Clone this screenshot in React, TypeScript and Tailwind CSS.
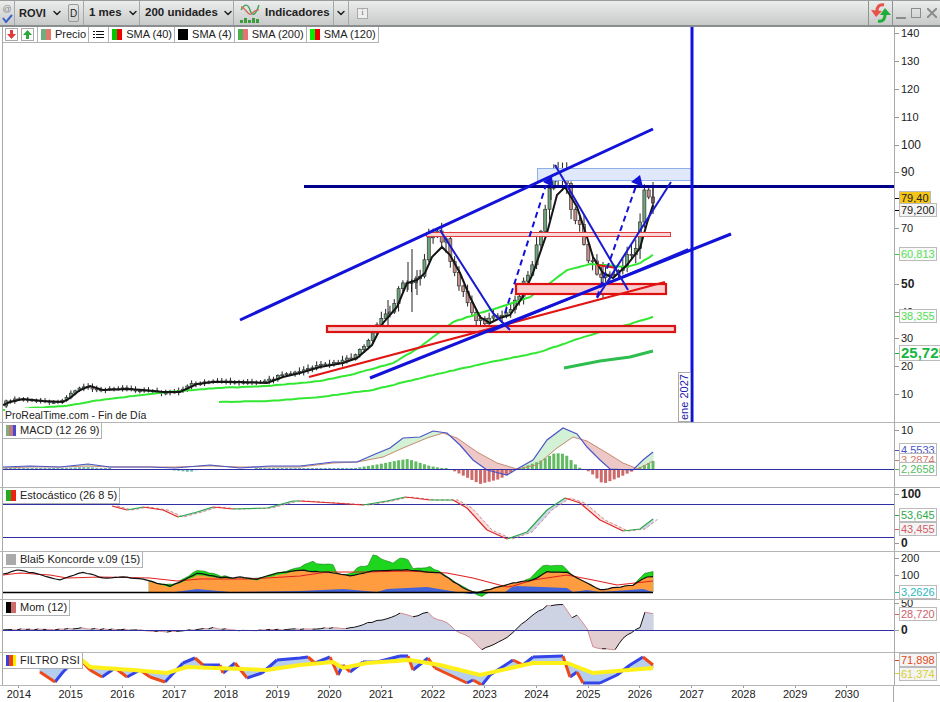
import { ChevronDown } from 'lucide-react';

type Pt = [number, number];

// all series are in page pixels, each pane's viewBox starts at its own top
const sma4: Pt[] = [[3,405],[10,402],[23,399],[43,401],[63,402],[70,398],[80,390],[90,386],[103,390],[127,389],[143,390],[163,392],[180,392],[197,384],[213,382],[240,382],[267,383],[283,377],[300,373],[320,367],[343,363],[357,358],[372,345],[383,323],[397,307],[407,283],[417,280],[425,273],[432,257],[442,247],[450,255],[460,273],[470,297],[480,317],[490,323],[500,318],[510,315],[522,298],[533,273],[547,233],[557,195],[565,187],[577,207],[587,237],[593,257],[603,273],[613,278],[627,265],[640,248],[647,223],[653,205]];
const sma40: Pt[] = [[3,410],[33,408],[67,406],[100,400],[167,392],[217,388],[267,386],[320,381],[350,375],[393,363],[420,347],[453,322],[480,313],[507,305],[530,297],[550,283],[567,270],[590,264],[627,267],[640,263],[653,255]];
const sma120: Pt[] = [[219,402],[270,401],[320,397],[373,390],[433,375],[487,363],[540,352],[575,340],[607,330],[630,324],[653,317]];

const macd: Pt[] = [[3,467],[30,466],[60,467],[88,464],[110,467],[150,467],[175,468],[210,465],[240,468],[270,466],[300,466],[333,462],[357,462],[373,455],[390,448],[403,438],[420,437],[433,431],[447,433],[460,445],[473,460],[487,470],[507,475],[517,469],[533,460],[547,440],[563,428],[577,434],[587,447],[600,460],[610,469],[633,470],[643,460],[653,452]];
const macdSig: Pt[] = [[3,468],[30,467],[60,467],[88,466],[110,467],[150,467],[175,467],[210,466],[240,467],[270,467],[300,467],[333,463],[357,462],[383,457],[403,448],[427,438],[443,433],[457,438],[477,452],[497,463],[517,469],[537,465],[557,448],[573,437],[587,441],[607,453],[623,463],[638,469],[653,461]];
const macdHist: Pt[] = [[3,1],[60,1],[88,2],[110,0],[140,-1],[170,-1],[190,-3],[200,0],[240,-1],[272,1],[300,1],[340,1],[355,1],[380,5],[400,9],[408,10],[430,3],[447,0],[452,-1],[480,-15],[500,-10],[515,-1],[520,1],[540,8],[555,16],[565,15],[578,2],[583,0],[590,-3],[603,-15],[620,-8],[635,-1],[640,2],[653,8]];

const stochBase: Pt[] = [[112,506],[127,510],[143,507],[163,510],[178,517],[197,512],[213,507],[233,509],[267,508],[293,501],[300,501],[333,503],[363,505],[387,501],[405,497],[430,500],[453,500],[467,508],[487,530],[507,539],[527,532],[547,510],[565,498],[580,503],[600,520],[623,531],[640,529],[653,519]];
const stochSig: Pt[] = stochBase.map(([x, y]): Pt => [x + 5, y]);

const konOrangeBase: Pt[] = [[149,581],[160,585],[170,587],[180,583],[197,575],[217,578],[233,579],[240,578],[257,580],[277,575],[300,570],[320,572],[337,573],[350,576],[373,571],[407,570],[440,573],[467,590],[477,592],[513,583],[533,580],[547,572],[567,572],[577,578],[600,590],[633,585],[647,577],[653,577]];
const konGreenBase: Pt[] = [[149,581],[165,585],[177,583],[197,570],[217,575],[233,578],[263,578],[277,573],[300,567],[313,562],[320,564],[333,565],[338,575],[353,573],[357,568],[368,565],[373,555],[393,563],[400,558],[408,560],[413,569],[430,567],[443,573],[457,583],[473,592],[482,597],[490,592],[510,588],[530,578],[543,566],[563,565],[572,575],[587,583],[600,591],[633,585],[645,573],[653,572]];
const konBlue: Pt[] = [[149,592],[175,592],[197,589],[230,592],[300,591],[343,589],[377,592],[387,589],[427,587],[457,592],[470,594],[505,592],[512,587],[517,586],[567,588],[573,592],[587,590],[600,592],[643,589],[653,592]];
const konBlackBase: Pt[] = [[3,574],[17,570],[33,573],[60,580],[83,572],[103,578],[123,577],[143,579],[157,583],[170,586],[180,582],[197,573],[217,577],[233,578],[240,577],[257,579],[277,573],[300,570],[320,572],[337,573],[350,576],[373,571],[407,570],[440,573],[467,590],[477,593],[513,583],[533,580],[547,572],[567,572],[577,578],[600,590],[633,585],[647,577],[653,577]];
const konRed: Pt[] = [[3,575],[20,573],[50,575],[67,578],[100,577],[150,578],[177,581],[200,579],[250,579],[300,576],[327,572],[367,572],[407,571],[447,573],[473,578],[507,587],[513,586],[533,580],[567,575],[593,580],[617,585],[653,581]];

const momBase: Pt[] = [[3,630],[30,629],[55,630],[77,628],[100,629],[133,630],[167,632],[190,630],[213,628],[247,631],[270,630],[300,629],[333,628],[350,628],[372,622],[387,619],[400,613],[413,617],[428,612],[433,617],[447,623],[455,630],[470,637],[482,650],[490,646],[507,638],[517,628],[530,617],[547,606],[563,604],[572,618],[577,615],[587,628],[593,647],[615,650],[623,638],[640,627],[645,612],[653,614]];

const rsi: Pt[] = [[40,672],[55,682],[63,672],[78,657],[90,670],[102,677],[115,668],[127,677],[140,670],[150,677],[165,682],[183,663],[195,658],[203,665],[220,665],[223,673],[235,663],[247,678],[262,673],[277,660],[300,658],[308,657],[315,663],[330,657],[338,675],[343,665],[350,672],[363,662],[377,662],[400,656],[408,656],[413,670],[428,658],[435,668],[467,683],[473,680],[482,685],[490,675],[513,660],[523,665],[533,657],[563,656],[570,677],[577,672],[583,683],[600,683],[617,675],[630,665],[643,657],[653,665]];
const rsiAvg: Pt[] = [[70,656],[80,658],[90,667],[133,670],[167,673],[187,667],[267,670],[300,665],[333,662],[343,668],[367,663],[410,660],[440,665],[480,675],[533,663],[567,663],[593,673],[653,668]];

const rnd = (i: number) => {
  const v = Math.sin(i * 12.9898) * 43758.5453;
  return v - Math.floor(v);
};

// adds a point per bar between the key points so lines look monthly, not straight
const rough = (pts: Pt[], amp: number): Pt[] => {
  const out: Pt[] = [pts[0]];
  for (let i = 1; i < pts.length; i++) {
    const [x0, y0] = pts[i - 1];
    const [x1, y1] = pts[i];
    const n = Math.max(1, Math.round((x1 - x0) / 4.312));
    for (let k = 1; k <= n; k++) {
      const x = x0 + ((x1 - x0) * k) / n;
      const y = y0 + ((y1 - y0) * k) / n + (rnd(x * 3.7) - 0.5) * amp;
      out.push([x, y]);
    }
  }
  return out;
};

const stoch = rough(stochBase, 0.6);
const konOrange = rough(konOrangeBase, 1);
const konGreen = rough(konGreenBase, 1.6);
const konBlack = rough(konBlackBase, 0.8);
const mom = rough(momBase, 1.2);

const at = (pts: Pt[], x: number) => {
  if (x <= pts[0][0]) return pts[0][1];
  for (let i = 1; i < pts.length; i++) {
    if (x <= pts[i][0]) {
      const [x0, y0] = pts[i - 1];
      const [x1, y1] = pts[i];
      return y0 + ((y1 - y0) * (x - x0)) / (x1 - x0);
    }
  }
  return pts[pts.length - 1][1];
};

const line = (pts: Pt[]) => 'M' + pts.map((p) => p.map((n) => +n.toFixed(1)).join(' ')).join('L');

// segments going up on screen vs going down
const split = (pts: Pt[]) => {
  let up = '';
  let down = '';
  for (let i = 1; i < pts.length; i++) {
    const seg = `M${pts[i - 1].join(' ')}L${pts[i].join(' ')}`;
    if (pts[i][1] <= pts[i - 1][1]) up += seg;
    else down += seg;
  }
  return { up, down };
};

// 1px columns between two series, split by which one is on top
const band = (a: Pt[], b: Pt[], x0: number, x1: number) => {
  let above = '';
  let below = '';
  for (let x = x0; x <= x1; x++) {
    const ya = at(a, x);
    const yb = at(b, x);
    const seg = `M${x} ${ya.toFixed(1)}V${yb.toFixed(1)}`;
    if (ya <= yb) above += seg;
    else below += seg;
  }
  return { above, below };
};

const area = (top: Pt[], base: number) => {
  const first = top[0][0];
  const last = top[top.length - 1][0];
  return `M${first} ${base}L${line(top).slice(1)}L${last} ${base}Z`;
};

// last bars are read off the picture
const lastCloses: Record<number, number> = { 147: 222, 148: 190, 149: 197, 150: 203 };

const candles = (() => {
  const out: { x: number; open: number; close: number; high: number; low: number }[] = [];
  let prev = 406;
  for (let i = 0; i < 151; i++) {
    const x = 653 - (150 - i) * 4.312;
    const lift = (x > 426 && x < 447) || (x > 545 && x < 568) ? -14 : 0;
    const scale = 0.6 + (400 - at(sma4, x)) * 0.018;
    const close = lastCloses[i] ?? at(sma4, x + 5) + lift + (rnd(i) - 0.5) * scale * 3;
    const high = Math.min(prev, close) - rnd(i + 300) * scale * 3 - 1;
    const low = Math.max(prev, close) + rnd(i + 700) * scale * 3 + 1;
    out.push({ x, open: prev, close, high, low });
    prev = close;
  }
  return out;
})();

const years = [2014, 2015, 2016, 2017, 2018, 2019, 2020, 2021, 2022, 2023, 2024, 2025, 2026, 2027, 2028, 2029, 2030];

const Swatch = ({ colors }: { colors: string[] }) => (
  <span className="flex h-[11px] w-[10px] shrink-0">
    {colors.map((c, i) => (
      <span key={i} className="flex-1" style={{ background: c }} />
    ))}
  </span>
);

const LegendItem = ({ colors, label }: { colors: string[]; label: string }) => (
  <div className="flex h-full items-center gap-[4px] border-r border-[#b0b3b3] pl-[3px] pr-[2px] whitespace-nowrap">
    <Swatch colors={colors} />
    <span>{label}</span>
  </div>
);

const PaneLabel = ({ colors, label }: { colors: string[]; label: string }) => (
  <div className="absolute left-0 top-0 z-10 flex h-[16px] items-center gap-[4px] border-b border-r border-[#b0b3b3] bg-white pl-[3px] pr-[2px] text-[11px] leading-none text-[#222] whitespace-nowrap">
    <Swatch colors={colors} />
    <span>{label}</span>
  </div>
);

type AxisItem = { y: number; text: string; strong?: boolean; big?: boolean };
type TagItem = { y: number; h?: number; text: string; color: string; bg?: string; big?: boolean; tick?: string };

const Axis = ({ top, items, tags = [] }: { top: number; items: AxisItem[]; tags?: TagItem[] }) => (
  <div className="relative w-[46px] shrink-0 overflow-hidden border-l border-[#a9a9a9] text-[11px] leading-none text-[#222]">
    {items.map((a) => (
      <div key={a.text + a.y} className="absolute left-0 flex items-center" style={{ top: a.y - top - 7, height: 14 }}>
        <span className="h-px w-[4px] bg-[#999]" />
        <span className={a.big ? 'ml-[2px] text-[12px] font-bold' : a.strong ? 'ml-[2px] text-[12px]' : 'ml-[2px]'}>{a.text}</span>
      </div>
    ))}
    {tags.map((t) => (
      <div key={t.text} className="absolute left-0 flex items-center" style={{ top: t.y - top, height: t.h ?? 14 }}>
        <span className="h-px w-[4px]" style={{ background: t.tick ?? t.color }} />
        <span
          className={
            t.big
              ? 'border border-[#bbb] bg-white px-px text-[15px] font-bold leading-[14px]'
              : 'border border-[#bbb] px-[1px] text-[11px] leading-[12px]'
          }
          style={{ color: t.color, background: t.bg ?? '#fff' }}
        >
          {t.text}
        </span>
      </div>
    ))}
  </div>
);

const Plot = ({ top, h, children }: { top: number; h: number; children: React.ReactNode }) => (
  <svg className="block h-full w-full" viewBox={`3 ${top} 891 ${h}`}>
    {children}
  </svg>
);

function MainChart() {
  return (
    <Plot top={27} h={395}>
      {candles.map((c, i) => (
        <g key={i}>
          <path d={`M${c.x} ${c.high}V${c.low}`} stroke="#222" strokeWidth="1" />
          <rect
            x={c.x - 1.5}
            y={Math.min(c.open, c.close)}
            width="3"
            height={Math.max(1, Math.abs(c.open - c.close))}
            fill={c.close <= c.open ? '#6fa57c' : '#c8908a'}
            stroke="#333"
            strokeWidth="0.7"
          />
        </g>
      ))}
      {/* long wicks */}
      <path d="M412 249V312M408 262V290M417 270V295M556 165V182M603 262V298M653 182V214M551 172V200M388 300V330" stroke="#222" strokeWidth="1" />
      <path d={line(rough(sma120, 0.5))} fill="none" stroke="#33e833" strokeWidth="2" />
      <path d={line(rough(sma40, 0.5))} fill="none" stroke="#33e833" strokeWidth="2" />
      <path d="M564 368L600 361L630 357L653 351" fill="none" stroke="#2fbd4f" strokeWidth="3" />
      <path d={line(sma4)} fill="none" stroke="#151515" strokeWidth="2" />

      <rect x="537.5" y="168.5" width="154" height="12" fill="#dfe9fb" stroke="#8fb0ea" />
      <rect x="426.5" y="232.5" width="244" height="4" fill="#fbd6d6" stroke="#e0393b" />
      <rect x="516" y="284" width="150" height="10" fill="#fbcfcf" stroke="#dd1111" strokeWidth="2.2" />
      <rect x="327" y="326" width="348" height="6" fill="#fbcfcf" stroke="#d81414" strokeWidth="2.2" />
      <path d="M309 377L665 282" stroke="#e21515" strokeWidth="2" />
      <path d="M597 265L617 268" stroke="#e21515" strokeWidth="2" />

      <path d="M304 186.5H894" stroke="#00008b" strokeWidth="3" />
      <path d="M692 27V422" stroke="#1111dd" strokeWidth="3" />
      <path d="M240 320L653 129" stroke="#1212d8" strokeWidth="3" />
      <path d="M370 378L731 234" stroke="#1212d8" strokeWidth="3" />
      <path d="M490 332L688 249" stroke="#1212d8" strokeWidth="1.5" />
      <path d="M440 230L493 313L510 330" fill="none" stroke="#1a1ad0" strokeWidth="2" />
      <path d="M555 165L628 290" stroke="#1a1ad0" strokeWidth="2" />
      <path d="M597 298L671 182" stroke="#1a1ad0" strokeWidth="2" />
      <path d="M505 313L546 185" stroke="#1212d8" strokeWidth="2" strokeDasharray="6 4" />
      <path d="M597 297L636 186" stroke="#1212d8" strokeWidth="2" strokeDasharray="6 4" />
      <path d="M543 182L552 176L553 187Z" fill="#1212d8" />
      <path d="M631 182L640 175L643 187Z" fill="#1212d8" />
    </Plot>
  );
}

function MacdChart() {
  const b = band(macd, macdSig, 3, 653);
  const bars = candles.filter((c) => c.x >= 3);
  return (
    <Plot top={423} h={64}>
      <path d={b.above} stroke="#c4ecc6" fill="none" />
      <path d={b.below} stroke="#e9b5b5" fill="none" />
      {bars.map((c, i) => {
        const v = at(macdHist, c.x);
        const color = c.x < 360 ? '#6fb4a8' : v >= 0 ? '#62bb62' : '#d06a6a';
        const h = Math.max(1, Math.abs(v));
        return <rect key={i} x={c.x - 1.5} y={v >= 0 ? 469 - h : 469} width="3" height={h} fill={color} />;
      })}
      <path d={line(macdSig)} fill="none" stroke="#c78a72" strokeWidth="1" />
      <path d={line(macd)} fill="none" stroke="#4a55c8" strokeWidth="1.2" />
      <path d="M3 469.5H894" stroke="#2f2fa6" strokeWidth="1" />
    </Plot>
  );
}

function StochChart() {
  const b = band(stoch, stochSig, 112, 653);
  const s = split(stochBase);
  return (
    <Plot top={488} h={63}>
      <path d={b.above} stroke="#bcc8e4" fill="none" />
      <path d={b.below} stroke="#f8d2d2" fill="none" />
      <path d="M3 504.5H894M3 537.5H894" stroke="#2f2fa6" strokeWidth="1" />
      <path d={line(stochSig)} fill="none" stroke="#d08a8a" strokeWidth="1" strokeDasharray="3 2" />
      <path d={s.up} fill="none" stroke="#2ea84a" strokeWidth="1.2" />
      <path d={s.down} fill="none" stroke="#e02a2a" strokeWidth="1.2" />
    </Plot>
  );
}

function KoncordeChart() {
  return (
    <Plot top={552} h={47}>
      <path d={area(konGreen, 592)} fill="#1fd61f" stroke="#0d7a0d" strokeWidth="0.6" />
      <path d={area(konOrange, 592)} fill="#ff9c3f" />
      <path d={area(konBlue, 592)} fill="#4264d8" />
      <path d={line(konRed)} fill="none" stroke="#e22222" strokeWidth="1.2" />
      <path d={line(konBlack)} fill="none" stroke="#111" strokeWidth="1.2" />
      <path d="M3 592.5H653" stroke="#000" strokeWidth="1.6" />
    </Plot>
  );
}

function MomChart() {
  const zero: Pt[] = [[3, 630], [653, 630]];
  const b = band(mom, zero, 3, 653);
  const s = split(mom);
  return (
    <Plot top={600} h={52}>
      <path d={b.above} stroke="#bcc5da" fill="none" />
      <path d={b.below} stroke="#d9bcc0" fill="none" />
      <path d={s.up} fill="none" stroke="#111" strokeWidth="1" />
      <path d={s.down} fill="none" stroke="#d48a90" strokeWidth="1" />
      <path d="M3 630.5H894" stroke="#2f2fa6" strokeWidth="1" />
    </Plot>
  );
}

function RsiChart() {
  const b = band(rsi, rsiAvg, 40, 653);
  const s = split(rsi);
  return (
    <Plot top={653} h={32}>
      <path d={b.above} stroke="#9cbde8" fill="none" />
      <path d={b.below} stroke="#9cbde8" fill="none" />
      <path d={s.up} fill="none" stroke="#3344e8" strokeWidth="3" />
      <path d={s.down} fill="none" stroke="#ee4a18" strokeWidth="3" />
      <path d={line(rsiAvg)} fill="none" stroke="#fff01a" strokeWidth="4" />
    </Plot>
  );
}

function IndicatorIcon() {
  return (
    <svg width="20" height="24" viewBox="0 0 20 24" className="shrink-0">
      <path d="M1 9C5 2 8 3 10 9S15 16 19 4" fill="none" stroke="#3aa35a" strokeWidth="1.4" />
      <path d="M1 6C5 6 8 15 11 13S16 8 19 9" fill="none" stroke="#d86a5a" strokeWidth="1.4" />
      <path d="M0 19h3v3H0zM4 17h3v5H4zM8 19h3v3H8zM12 17h3v5h-3zM16 18h3v4h-3z" fill="#3f9a3f" />
    </svg>
  );
}

function RefreshIcon() {
  return (
    <svg width="20" height="22" viewBox="0 0 20 22">
      <path d="M13 3C8 2 6 5 6 9" fill="none" stroke="#e8524a" strokeWidth="3" />
      <path d="M0 8L11 9L5 15Z" fill="#e8524a" />
      <path d="M7 19C12 20 14 17 14 13" fill="none" stroke="#1fae3a" strokeWidth="3" />
      <path d="M9 13L20 13L14 6Z" fill="#1fae3a" />
    </svg>
  );
}

export default function App() {
  return (
    <div className="flex h-[702px] w-[940px] flex-col overflow-hidden bg-white font-['Liberation_Sans',sans-serif] text-[#222]">
      {/* Toolbar */}
      <header className="flex h-[27px] shrink-0 items-stretch whitespace-nowrap border-b-2 border-t border-b-[#8b8e8e] border-t-[#9a9d9d] bg-gradient-to-b from-[#eceded] to-[#c8caca] text-[11.5px] font-bold">
        <div className="flex w-[15px] shrink-0 flex-col items-center justify-center border-r border-[#a5a8a8] text-[#888]">
          <span className="text-[9px] font-normal leading-[10px]">@</span>
          <svg width="11" height="9" viewBox="0 0 11 9" className="shrink-0">
            <path d="M1 4L4 8L10 1" fill="none" stroke="#3a62c8" strokeWidth="2" />
          </svg>
        </div>
        <div className="flex w-[53px] shrink-0 items-center gap-[5px] pl-[4px] text-[11px]">
          ROVI <ChevronDown size={12} strokeWidth={3} className="shrink-0" />
        </div>
        <div className="flex w-[15px] shrink-0 items-center">
          <span className="flex h-[18px] w-[11px] items-center justify-center rounded-[2px] border border-[#999] text-[10px] font-normal">D</span>
        </div>
        <div className="flex w-[56px] shrink-0 items-center gap-[5px] border-l border-[#a5a8a8] pl-[5px]">
          1 mes <ChevronDown size={12} strokeWidth={3} className="shrink-0" />
        </div>
        <div className="flex w-[94px] shrink-0 items-center gap-[4px] border-l border-[#a5a8a8] pl-[5px]">
          200 unidades <ChevronDown size={12} strokeWidth={3} className="shrink-0" />
        </div>
        <div className="flex w-[100px] shrink-0 items-center gap-[4px] border-l border-[#a5a8a8] pl-[6px]">
          <IndicatorIcon />
          <span className="ml-[1px]">Indicadores</span>
        </div>
        <div className="flex w-[15px] shrink-0 items-center justify-center border-l border-[#a5a8a8]">
          <ChevronDown size={12} strokeWidth={3} className="shrink-0" />
        </div>
        <div className="flex flex-1 items-center border-l border-[#a5a8a8] pl-[8px]">
          <span className="flex h-[11px] w-[11px] items-center justify-center border border-[#aaa] bg-[#eee] font-['Liberation_Serif',serif] text-[9px] font-normal text-[#777]">i</span>
        </div>
        <div className="flex w-[25px] shrink-0 items-center justify-center border-l border-r border-[#8f9292]">
          <RefreshIcon />
        </div>
        <div className="flex w-[47px] shrink-0 items-center justify-around text-[#8a8d8d]">
          <span className="mt-[10px] h-[2px] w-[10px] bg-[#8a8d8d]" />
          <span className="h-[10px] w-[10px] border border-[#8a8d8d]" />
          <svg width="10" height="10" viewBox="0 0 10 10">
            <path d="M0 0L10 10M10 0L0 10" stroke="#8a8d8d" strokeWidth="2" />
          </svg>
        </div>
      </header>

      {/* Main price pane */}
      <div className="flex h-[395px] shrink-0 pl-[2px]">
        <div className="relative min-w-0 flex-1 border-l border-[#a9a9a9]">
          <MainChart />
          <div className="absolute left-0 top-0 z-10 flex h-[16px] items-stretch border-b border-[#b0b3b3] bg-white text-[11px] leading-none">
            <div className="flex items-center gap-[3px] border-r border-[#b0b3b3] pl-[2px] pr-[3px]">
              <span className="flex h-[13px] w-[13px] items-center justify-center border border-[#aaa]">
                <svg width="9" height="9" viewBox="0 0 9 9"><path d="M3 0h3v4h3L4.5 9L0 4h3zM0 8h9" fill="#e03a3a" /></svg>
              </span>
              <span className="flex h-[13px] w-[13px] items-center justify-center border border-[#aaa]">
                <svg width="9" height="9" viewBox="0 0 9 9"><path d="M3 9h3V5h3L4.5 0L0 5h3z" fill="#2aa83a" /></svg>
              </span>
            </div>
            <LegendItem colors={['#6fae7f', '#e07a6a']} label="Precio" />
            <div className="flex w-[20px] items-center justify-center border-r border-[#b0b3b3]">
              <svg width="11" height="9" viewBox="0 0 11 9"><path d="M0 1h2v1H0zM3 1h8v1H3zM0 4h2v1H0zM3 4h8v1H3zM0 7h2v1H0zM3 7h8v1H3z" fill="#111" /></svg>
            </div>
            <LegendItem colors={['#00c800', '#ee0000']} label="SMA (40)" />
            <LegendItem colors={['#000', '#000']} label="SMA (4)" />
            <LegendItem colors={['#4caf50', '#e57373']} label="SMA (200)" />
            <LegendItem colors={['#00f000', '#ee0000']} label="SMA (120)" />
          </div>
          <div className="absolute bottom-0 left-[2px] z-10 bg-white text-[10.5px] leading-[14px]">ProRealTime.com - Fin de Día</div>
          <div className="absolute bottom-0 left-[675px] z-10 flex h-[50px] w-[13px] items-center justify-center border border-[#aaa] bg-white text-[11px] leading-none text-[#2222aa] [writing-mode:vertical-rl] rotate-180">ene 2027</div>
        </div>
        <Axis
          top={27}
          items={[
            { y: 33, text: '140' },
            { y: 61, text: '130' },
            { y: 89, text: '120' },
            { y: 117, text: '110' },
            { y: 145, text: '100', strong: true },
            { y: 172, text: '90', strong: true },
            { y: 228, text: '70' },
            { y: 284, text: '50', big: true },
            { y: 312, text: '40' },
            { y: 338, text: '30' },
            { y: 366, text: '20' },
            { y: 394, text: '10' },
          ]}
          tags={[
            { y: 191, text: '79,40', color: '#222', bg: '#f5c518', tick: '#000' },
            { y: 203, text: '79,200', color: '#222', bg: '#f4f4f4', tick: '#000' },
            { y: 247, text: '60,813', color: '#55e055', bg: '#fafafa', tick: '#39c839' },
            { y: 309, text: '38,355', color: '#55e055', bg: '#fafafa', tick: '#39c839' },
            { y: 345, text: '25,725', color: '#17b544', big: true, h: 16 },
          ]}
        />
      </div>

      {/* Indicator panes */}
      <div className="flex h-[65px] shrink-0 border-t border-[#b5b5b5] pl-[2px]">
        <div className="relative min-w-0 flex-1 border-l border-[#a9a9a9]">
          <PaneLabel colors={['#7fae7f', '#c07a7a', '#4a4ad0']} label="MACD (12 26 9)" />
          <MacdChart />
        </div>
        <Axis
          top={423}
          items={[{ y: 430, text: '10' }]}
          tags={[
            { y: 443, text: '4,5533', color: '#4a55c8' },
            { y: 453, text: '3,2874', color: '#d07a6a' },
            { y: 462, text: '2,2658', color: '#4fbb5f' },
          ]}
        />
      </div>
      <div className="flex h-[64px] shrink-0 border-t border-[#b5b5b5] pl-[2px]">
        <div className="relative min-w-0 flex-1 border-l border-[#a9a9a9]">
          <PaneLabel colors={['#22aa22', '#ee2211']} label="Estocástico (26 8 5)" />
          <StochChart />
        </div>
        <Axis
          top={488}
          items={[
            { y: 494, text: '100', big: true },
            { y: 543, text: '0', big: true },
          ]}
          tags={[
            { y: 508, text: '53,645', color: '#2ea84a' },
            { y: 522, text: '43,455', color: '#d0606a', bg: '#f4f4f4' },
          ]}
        />
      </div>
      <div className="flex h-[48px] shrink-0 border-t border-[#b5b5b5] pl-[2px]">
        <div className="relative min-w-0 flex-1 border-l border-[#a9a9a9]">
          <PaneLabel colors={['#aaa', '#aaa']} label="Blai5 Koncorde v.09 (15)" />
          <KoncordeChart />
        </div>
        <Axis
          top={552}
          items={[
            { y: 558, text: '200' },
            { y: 575, text: '100' },
          ]}
          tags={[{ y: 585, text: '3,2626', color: '#28b8c0' }]}
        />
      </div>
      <div className="flex h-[53px] shrink-0 border-t border-[#b5b5b5] pl-[2px]">
        <div className="relative min-w-0 flex-1 border-l border-[#a9a9a9]">
          <PaneLabel colors={['#000', '#d06a6a']} label="Mom (12)" />
          <MomChart />
        </div>
        <Axis
          top={600}
          items={[
            { y: 603, text: '50' },
            { y: 630, text: '0', big: true },
          ]}
          tags={[{ y: 607, text: '28,720', color: '#d0606a' }]}
        />
      </div>
      <div className="flex h-[33px] shrink-0 border-t border-[#b5b5b5] pl-[2px]">
        <div className="relative min-w-0 flex-1 overflow-hidden border-l border-[#a9a9a9]">
          <PaneLabel colors={['#3344dd', '#ee4411', '#ffee00']} label="FILTRO RSI" />
          <RsiChart />
        </div>
        <Axis
          top={653}
          items={[]}
          tags={[
            { y: 653, text: '71,898', color: '#e04a20', bg: '#f4f4f4' },
            { y: 667, text: '61,374', color: '#d8d030', bg: '#f4f4f4', h: 13 },
          ]}
        />
      </div>

      {/* Date axis */}
      <div className="flex flex-1 border-t border-[#b5b5b5]">
        <div className="ml-[-7px] flex h-full w-[901px] shrink-0 border-r border-[#a9a9a9]">
          {years.map((y) => (
            <div key={y} className="flex w-[51.75px] shrink-0 flex-col items-center text-[11px] leading-[13px]">
              <span className="h-[2px] w-px bg-[#999]" />
              <span>{y}</span>
            </div>
          ))}
        </div>
      </div>
    </div>
  );
}
